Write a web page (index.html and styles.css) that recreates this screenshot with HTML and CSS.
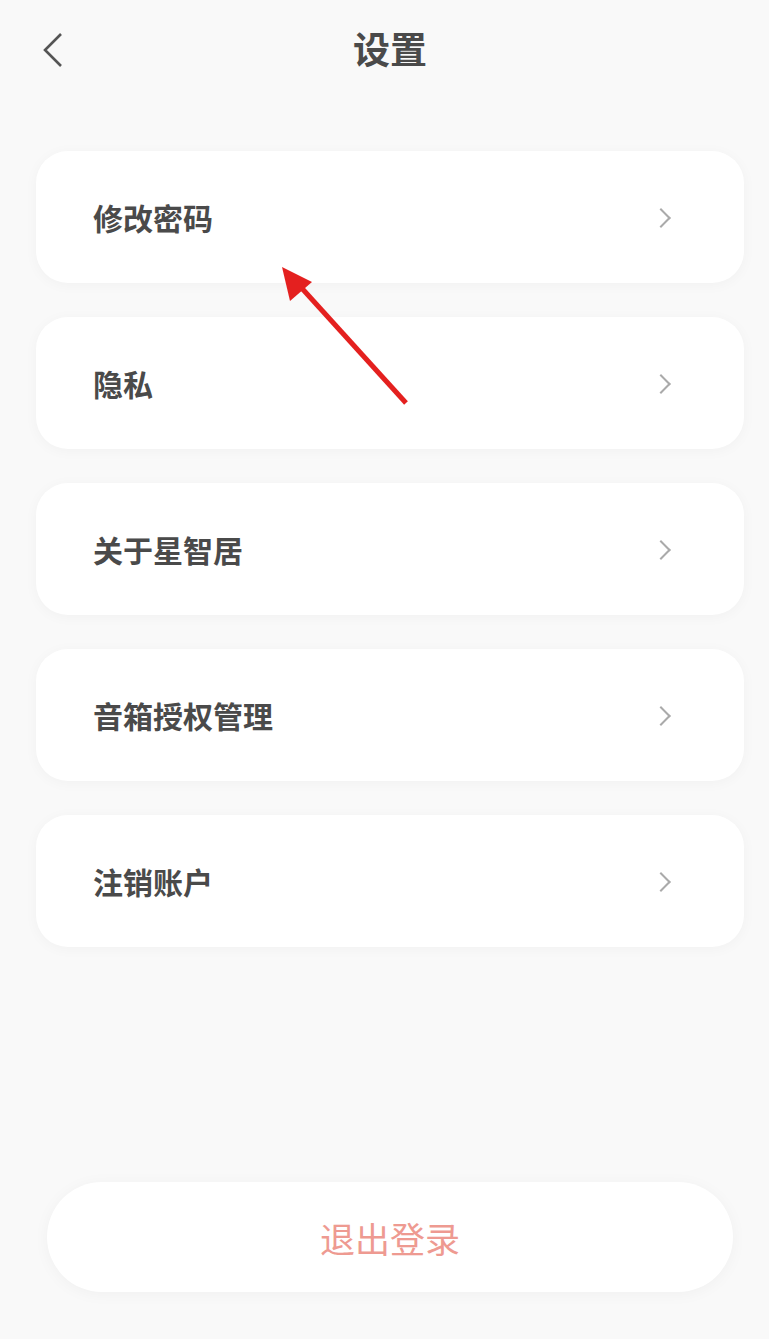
FILE: index.html
```html
<!DOCTYPE html>
<html lang="zh-CN">
<head>
  <meta charset="UTF-8" />
  <meta name="viewport" content="width=device-width, initial-scale=1" />
  <title>设置</title>
  <link rel="stylesheet" href="styles.css">
</head>
<body>
  <header class="topbar">
    <button class="back-btn" aria-label="返回">
      <svg width="22" height="34" viewBox="0 0 22 34">
        <polyline points="20,1 4,17 20,33" fill="none" stroke="#555" stroke-width="2.6" stroke-linejoin="miter" />
      </svg>
    </button>
    <h1>设置</h1>
    <span></span>
  </header>

  <ul class="menu">
    <li class="menu-item"><span>修改密码</span><i class="chevron"></i></li>
    <li class="menu-item"><span>隐私</span><i class="chevron"></i></li>
    <li class="menu-item"><span>关于星智居</span><i class="chevron"></i></li>
    <li class="menu-item"><span>音箱授权管理</span><i class="chevron"></i></li>
    <li class="menu-item"><span>注销账户</span><i class="chevron"></i></li>
  </ul>

  <div class="logout-wrap">
    <button class="logout-btn">退出登录</button>
  </div>

  <!-- annotation -->
  <svg class="pointer" width="160" height="160" viewBox="260 250 160 160">
    <line x1="406" y1="403" x2="298" y2="284" stroke="#e4201f" stroke-width="5" stroke-linecap="butt" />
    <polygon points="282,267 312,282 290,301" fill="#e4201f" />
  </svg>
</body>
</html>
```

FILE: styles.css
```css
* {
  box-sizing: border-box;
}
body {
  margin: 0;
  background: #f9f9f9;
  font-family: "Noto Sans CJK SC", "Noto Sans", sans-serif;
  color: #474747;
  position: relative;
  min-height: 1339px;
}
.topbar {
  height: 100px;
  display: grid;
  grid-template-columns: 1fr auto 1fr;
  align-items: center;
  padding: 0 0 0 11px;
}
.topbar h1 {
  margin: 0;
  font-size: 37px;
  font-weight: 700;
  color: #4a4a4a;
  line-height: 1;
  padding-bottom: 3px;
}
.back-btn {
  justify-self: start;
  margin-left: 30px;
  background: none;
  border: none;
  padding: 0;
  display: flex;
  cursor: pointer;
}
.menu {
  list-style: none;
  margin: 51px 25px 0 36px;
  padding: 0;
  display: flex;
  flex-direction: column;
  gap: 34px;
}
.menu-item {
  height: 132px;
  background: #fff;
  border-radius: 32px;
  box-shadow: 0 2px 14px rgba(0, 0, 0, 0.035);
  display: flex;
  align-items: center;
  justify-content: space-between;
  padding: 0 76px 0 57px;
  font-size: 30px;
  font-weight: 700;
  color: #4a4a4a;
}
.chevron {
  width: 14px;
  height: 14px;
  border-top: 2px solid #aaa;
  border-right: 2px solid #aaa;
  transform: rotate(45deg);
  margin-top: 1px;
}
.logout-wrap {
  margin: 235px 36px 0 47px;
}
.logout-btn {
  width: 100%;
  height: 110px;
  border: none;
  border-radius: 55px;
  background: #fff;
  box-shadow: 0 2px 16px rgba(0, 0, 0, 0.04);
  color: #ee9a91;
  font-family: inherit;
  font-size: 35px;
  cursor: pointer;
}
.pointer {
  position: absolute;
  left: 260px;
  top: 250px;
}
```
